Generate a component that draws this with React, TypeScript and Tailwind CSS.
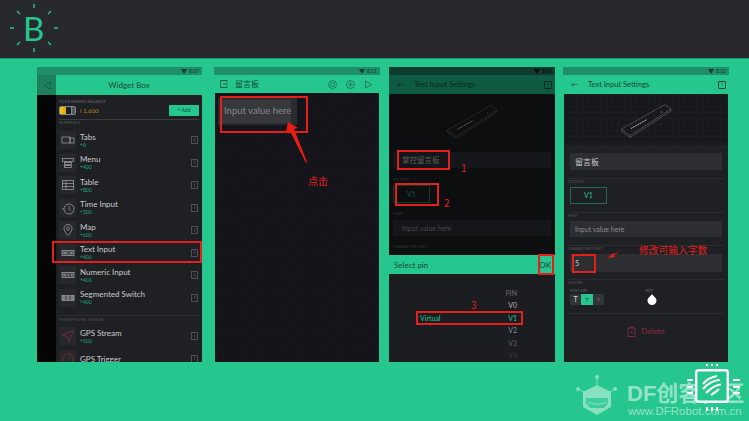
import type { ReactNode } from "react";

const uiFont = { fontFamily: '"Lato", "Noto Sans CJK SC", sans-serif' };
const cjkFont = { fontFamily: '"Noto Sans CJK SC", sans-serif' };

const widgets = [
  { name: "Tabs", cost: "+0", icon: "tabs" },
  { name: "Menu", cost: "+400", icon: "menu" },
  { name: "Table", cost: "+800", icon: "table" },
  { name: "Time Input", cost: "+200", icon: "time" },
  { name: "Map", cost: "+600", icon: "map" },
  { name: "Text Input", cost: "+400", icon: "text" },
  { name: "Numeric Input", cost: "+400", icon: "numeric" },
  { name: "Segmented Switch", cost: "+400", icon: "segment" },
];

function WidgetIcon({ kind }: { kind: string }) {
  const c = "#a4a6a9";
  return (
    <svg width="14" height="14" viewBox="0 0 14 14" fill="none" stroke={c} strokeWidth="0.7">
      {kind === "tabs" && (
        <>
          <rect x="1" y="4" width="8" height="6" />
          <rect x="9" y="5" width="4" height="5" />
        </>
      )}
      {kind === "menu" && (
        <>
          <rect x="1.5" y="2.500" width="11" height="3" />
          <rect x="3.500" y="6.500" width="7" height="2" />
          <rect x="3.500" y="9.500" width="7" height="2" />
        </>
      )}
      {kind === "table" && (
        <>
          <rect x="1.500" y="2.500" width="11" height="9" />
          <path d="M1.500 5.500h11M1.500 8.500h11M5 2.500v9" />
        </>
      )}
      {kind === "time" && (
        <>
          <circle cx="8" cy="8" r="5" />
          <path d="M8 5v3l2 1.500M1 8h2" />
        </>
      )}
      {kind === "map" && (
        <>
          <path d="M7 1.500c-2.500 0-4 1.800-4 4 0 3 4 7 4 7s4-4 4-7c0-2.200-1.500-4-4-4z" />
          <circle cx="7" cy="5.500" r="1.500" />
        </>
      )}
      {kind === "text" && (
        <>
          <rect x="1" y="4.500" width="12" height="5" fill="#4c4e52" />
          <path d="M2.500 7h3.500M9 7h2.500" stroke="#d8d9da" />
        </>
      )}
      {kind === "numeric" && (
        <>
          <rect x="1" y="4.500" width="12" height="5" fill="#4c4e52" />
          <path d="M2.500 7h2.500M7 7h1M10 7h1.500" stroke="#d8d9da" />
        </>
      )}
      {kind === "segment" && (
        <>
          <rect x="1" y="4.500" width="12" height="5" fill="#7b7d80" />
          <path d="M5 4.500v5M9 4.500v5" stroke="#222" />
        </>
      )}
      {kind === "gps" && <path d="M12.500 1.500 1.500 6l5 1.500 1.500 5z" stroke="#8f2c44" />}
      {kind === "trigger" && (
        <>
          <circle cx="7" cy="7" r="5.500" stroke="#8f2c44" />
          <path d="M7 7l3-3" stroke="#8f2c44" />
        </>
      )}
    </svg>
  );
}

function InfoBox() {
  return (
    <span className="flex h-[8px] w-[7px] items-center justify-center border border-[#4c4e52] text-[5px] leading-none text-[#6d6f72]">
      i
    </span>
  );
}

function WidgetRow({ name, cost, icon }: { name: string; cost?: string; icon: string }) {
  return (
    <div className="flex h-[22.5px] shrink-0 items-center pl-[3px] pr-[4px]">
      <div className="flex h-[18px] w-[17px] shrink-0 items-center justify-center bg-[#26282c]">
        <WidgetIcon kind={icon} />
      </div>
      <div className="ml-[4px] flex-1 leading-none">
        <div className="text-[8px] leading-[10px] text-[#c9cacc]">{name}</div>
        {cost && <div className="text-[5px] leading-[7px] text-[#25a87c]">{cost}</div>}
      </div>
      <InfoBox />
    </div>
  );
}

function StatusBar({ time, bg, color }: { time: string; bg: string; color: string }) {
  return (
    <div className={`flex h-[8px] shrink-0 items-center justify-end gap-[2px] pr-[3px] ${bg}`}>
      <svg width="6" height="5" viewBox="0 0 6 5">
        <path d="M0 0h6L3 5z" fill={color} />
      </svg>
      <span className="text-[5px] leading-none" style={{ color }}>
        {time}
      </span>
    </div>
  );
}

function Battery() {
  return (
    <div className="flex h-[9px] w-[17px] overflow-hidden rounded-[2px] border border-[#888a8c]">
      <div className="w-[6px] bg-gradient-to-r from-[#f6c90e] to-[#d9a90a]" />
      <div className="ml-auto w-[4px] border-l border-[#888a8c] bg-[#55575a]" />
    </div>
  );
}

function WidgetBoxPhone() {
  return (
    <div className="flex w-[165px] shrink-0 flex-col overflow-hidden">
      <StatusBar time="8:07" bg="bg-[#1f8f69]" color="#123c30" />
      <div className="flex h-[20px] shrink-0 items-center bg-[#25c78f]">
        <div className="flex h-full w-[19px] items-center justify-center bg-[#1c7f5e]">
          <svg width="8" height="9" viewBox="0 0 8 9" fill="none" stroke="#0f5d44" strokeWidth="0.8">
            <path d="M7 1v7L1 4.500z" />
          </svg>
        </div>
        <div className="flex-1 text-center text-[8px] text-[#174a3a]">Widget Box</div>
      </div>
      <div className="flex min-h-0 flex-1">
        <div className="w-[19px] shrink-0 bg-[#050506]" />
        <div className="min-w-0 flex-1 overflow-hidden bg-[#1e2024]">
          <div className="pl-[3px] pr-[3px] pt-[4px]">
            <div className="text-[4px] leading-[5px] text-[#67696c]">YOUR ENERGY BALANCE</div>
            <div className="mt-[1px] flex h-[11px] items-center">
              <Battery />
              <span className="ml-[4px] text-[6px] text-[#b8860b]">I 1,600</span>
              <span className="ml-auto flex h-[11px] w-[30px] items-center justify-center rounded-[1px] bg-[#25c78f] text-[5px] text-[#174a3a]">
                + Add
              </span>
            </div>
            <div className="mt-[3px] h-px bg-[#3a3c40]" />
            <div className="text-[4px] leading-[6px] text-[#56585b]">INTERFACE</div>
          </div>
          <div className="mt-[3px]">
            {widgets.map((w) => (
              <WidgetRow key={w.name} {...w} />
            ))}
            <div className="mx-[3px] mt-[6px] border-t border-[#2a2c30] text-[4px] leading-[8px] text-[#4f5154]">
              SMARTPHONE SENSORS
            </div>
            <div className="h-[1px]" />
            <WidgetRow name="GPS Stream" cost="+500" icon="gps" />
            <WidgetRow name="GPS Trigger" icon="trigger" />
          </div>
        </div>
      </div>
    </div>
  );
}

function CanvasPhone() {
  return (
    <div className="flex w-[166px] shrink-0 flex-col overflow-hidden">
      <StatusBar time="8:11" bg="bg-[#1f8f69]" color="#123c30" />
      <div className="flex h-[18px] shrink-0 items-center pl-[5px] pr-[7px] text-[#174a3a]">
        <svg width="10" height="10" viewBox="0 0 10 10" fill="none" stroke="#174a3a" strokeWidth="0.8">
          <path d="M8 3V1.500H1.500v7H8V7M4 5h5" />
        </svg>
        <span className="ml-[6px] text-[8px]" style={cjkFont}>
          留言板
        </span>
        <div className="ml-auto flex items-center gap-[9px]">
          <svg width="9" height="9" viewBox="0 0 9 9" fill="none" stroke="#1b5c48" strokeWidth="0.7">
            <circle cx="4.500" cy="4.500" r="4" />
            <circle cx="4.500" cy="4.500" r="2" />
          </svg>
          <svg width="9" height="9" viewBox="0 0 9 9" fill="none" stroke="#1b5c48" strokeWidth="0.7">
            <circle cx="4.500" cy="4.500" r="4" />
            <path d="M4.500 2v5M2 4.500h5" />
          </svg>
          <svg width="9" height="9" viewBox="0 0 9 9" fill="none" stroke="#1b5c48" strokeWidth="0.7">
            <path d="M1.500 1v7l6-3.500z" />
          </svg>
        </div>
      </div>
      <div className="mx-px flex-1 bg-[#14141a] bg-[radial-gradient(#2a2b31_0.5px,transparent_0.7px)] bg-[length:5.700px_5.700px] pl-[3px] pt-[5px]">
        <div className="flex h-[27px] w-[79px] items-center bg-[#2a2b2f] pl-[3px] pr-[6px]">
          <div className="flex h-[23px] w-full items-center bg-[#37383c] pl-[3px] text-[9.500px] whitespace-nowrap text-[#85868a]">
            Input value here
          </div>
        </div>
      </div>
    </div>
  );
}

function IsoWidget({ dim }: { dim?: boolean }) {
  const c = dim ? "#3c3d40" : "#77797c";
  const t = dim ? "#6a6b6e" : "#d0d1d3";
  return (
    <svg width="51" height="34" viewBox="0 0 51 34" fill="none" stroke={c} strokeWidth="0.5">
      <path d="M.5 25 44 .5l6 4.500L9 31.500z" />
      <path d="M.5 25v2L9 33.500 50 7V5M9 31.500v2" />
      <path d="M10 24.500 26 15.500" stroke={t} strokeWidth="0.9" strokeDasharray="1.500 0.500" />
      <path d="M40 8.500l1.500-.8" stroke={t} />
    </svg>
  );
}

function TitleBar({ bg, color }: { bg: string; color: string }) {
  return (
    <div className={`flex h-[19px] shrink-0 items-center pl-[8px] pr-[3px] ${bg}`} style={{ color }}>
      <span className="w-[17px] text-[7px] leading-none">←</span>
      <span className="text-[7.500px] whitespace-nowrap">Text Input Settings</span>
      <span className="ml-auto flex h-[8px] w-[8px] items-center justify-center rounded-[1px] border text-[5px] leading-none" style={{ borderColor: color }}>
        i
      </span>
    </div>
  );
}

function SelectPinPhone() {
  return (
    <div className="flex w-[166px] shrink-0 flex-col overflow-hidden">
      <StatusBar time="8:06" bg="bg-[#0d3b2d]" color="#0b0c0d" />
      <TitleBar bg="bg-[#0e5a43]" color="#0a2a20" />
      <div className="flex h-[161px] shrink-0 flex-col bg-[#0d0e10] px-[4px]">
        <div className="flex h-[58px] shrink-0 justify-center pt-[11px]">
          <IsoWidget dim />
        </div>
        <div className="flex h-[16px] shrink-0 items-center bg-[#15161a] px-[9px] text-[7.500px] text-[#5b5c5f]" style={cjkFont}>
          掌控留言板
        </div>
        <div className="mt-[9px] text-[4px] leading-[5px] text-[#36383a]">OUTPUT</div>
        <div className="mt-[3px] flex h-[18px] w-[37px] shrink-0 items-center justify-center border border-[#0f3a2c] text-[7px] text-[#0f5a43]">V1</div>
        <div className="mt-[8px] text-[4px] leading-[5px] text-[#36383a]">HINT</div>
        <div className="mt-[4px] flex h-[16px] shrink-0 items-center bg-[#15161a] px-[9px] text-[7px] text-[#45474a]">Input value here</div>
        <div className="mt-[8px] text-[4px] leading-[5px] text-[#36383a]">CHARACTER LIMIT</div>
      </div>
      <div className="flex h-[19px] shrink-0 items-center justify-between bg-[#25c78f] pl-[5px] pr-[4px] text-[8px] text-[#174a3a]">
        <span>Select pin</span>
        <span>OK</span>
      </div>
      <div className="flex min-h-0 flex-1 flex-col items-end overflow-hidden bg-[#1b1d21] pr-[38px] pt-[13px] text-[7px] leading-[12.400px]">
        <span className="text-[#66686b]">PIN</span>
        <span className="text-[#b7b8ba]">V0</span>
        <span className="relative w-full pl-[31px] text-right text-[#25c78f]">
          <span className="absolute left-[31px]">Virtual</span>V1
        </span>
        <span className="text-[#8b8d8f]">V2</span>
        <span className="text-[#5e6063]">V3</span>
        <span className="text-[#36383a]">V4</span>
      </div>
    </div>
  );
}

function SettingsPhone() {
  return (
    <div className="flex w-[166px] shrink-0 flex-col overflow-hidden">
      <StatusBar time="8:12" bg="bg-[#1f8f69]" color="#123c30" />
      <TitleBar bg="bg-[#25c78f]" color="#174a3a" />
      <div className="mx-px flex min-h-0 flex-1 flex-col bg-[#1e2024]">
        <div className="flex h-[51px] shrink-0 justify-center bg-[#17181b] bg-[linear-gradient(#1c1d21_1px,transparent_1px),linear-gradient(90deg,#1c1d21_1px,transparent_1px)] bg-[length:6px_6px] pt-[10px]">
          <IsoWidget />
        </div>
        <div className="mx-[6px] mt-[8px] flex h-[17px] shrink-0 items-center bg-[#2d2e32] px-[5px] text-[8px] text-[#c9cacc]" style={cjkFont}>
          留言板
        </div>
        <div className="mx-[4px] mt-[8px] border-t border-[#2a2c30] text-[4px] leading-[6px] text-[#55575a]">OUTPUT</div>
        <div className="mx-[6px] mt-[2px] flex h-[17px] w-[37px] shrink-0 items-center justify-center border border-[#1f6b52] text-[7px] text-[#25c78f]">V1</div>
        <div className="mx-[4px] mt-[8px] border-t border-[#2a2c30] text-[4px] leading-[6px] text-[#55575a]">HINT</div>
        <div className="mx-[6px] mt-[2px] flex h-[16px] shrink-0 items-center bg-[#2d2e32] px-[5px] text-[7px] text-[#8a8b8e]">Input value here</div>
        <div className="mx-[4px] mt-[8px] border-t border-[#2a2c30] text-[4px] leading-[6px] text-[#55575a]">CHARACTER LIMIT</div>
        <div className="mx-[6px] mt-[2px] flex h-[18px] shrink-0 items-center bg-[#2d2e32] px-[5px] text-[7px] text-[#c9cacc]">5</div>
        <div className="mx-[4px] mt-[7px] border-t border-[#2a2c30] text-[4px] leading-[6px] text-[#55575a]">DESIGN</div>
        <div className="relative mx-[6px] mt-[3px] h-[23px] shrink-0">
          <div className="text-[3.500px] leading-[5px] text-[#67696c]">FONT SIZE</div>
          <div className="flex">
            <span className="flex h-[11px] w-[11px] items-center justify-center bg-[#333438] text-[7px] text-[#d8d9da]">T</span>
            <span className="flex h-[11px] w-[12px] items-center justify-center bg-[#25c78f] text-[6px] text-[#174a3a]">T</span>
            <span className="flex h-[11px] w-[11px] items-center justify-center bg-[#333438] text-[4px] text-[#a5a6a8]">T</span>
          </div>
          <span className="absolute left-[75px] top-0 text-[3.500px] leading-[5px] text-[#67696c]">TEXT</span>
          <svg className="absolute left-[77px] top-[5px]" width="10" height="11" viewBox="0 0 10 11">
            <path d="M5 0c1 2 4.500 3.500 4.500 6.500a4.500 4.500 0 0 1-9 0C.5 3.500 4 2 5 0z" fill="#fff" />
          </svg>
        </div>
        <div className="mx-[4px] mt-[1px] border-t border-[#2a2c30]" />
        <div className="mt-[11px] flex items-center justify-center gap-[5px] text-[8px] text-[#8f2c44]">
          <svg width="9" height="11" viewBox="0 0 9 11" fill="none" stroke="#8f2c44" strokeWidth="0.8">
            <rect x="1" y="2" width="7" height="8.500" />
            <path d="M3 2V1h3v1M3.500 5l2 2.500M5.500 5l-2 2.500" />
          </svg>
          Delete
        </div>
      </div>
    </div>
  );
}

function RedBox({ className }: { className: string }) {
  return <div className={`absolute border-2 border-[#e3201b] ${className}`} />;
}

function RedLabel({ className, children }: { className: string; children: ReactNode }) {
  return (
    <span className={`absolute leading-none whitespace-nowrap text-[#e3201b] ${className}`} style={cjkFont}>
      {children}
    </span>
  );
}

function Annotations() {
  return (
    <>
      <RedBox className="left-[52px] top-[241px] h-[22px] w-[150px]" />
      <RedBox className="left-[220px] top-[96px] h-[37px] w-[88px]" />
      <RedBox className="left-[397px] top-[150px] h-[20px] w-[53px]" />
      <RedBox className="left-[395px] top-[183px] h-[23px] w-[44px]" />
      <RedBox className="left-[538px] top-[254px] h-[21px] w-[16px]" />
      <RedBox className="left-[416px] top-[311px] h-[14px] w-[107px]" />
      <RedBox className="left-[572px] top-[254px] h-[19px] w-[24px]" />
      <RedLabel className="left-[308px] top-[176px] text-[10px]">点击</RedLabel>
      <RedLabel className="left-[461px] top-[163px] text-[10px]">1</RedLabel>
      <RedLabel className="left-[444px] top-[198px] text-[10px]">2</RedLabel>
      <RedLabel className="left-[471px] top-[300px] text-[10px]">3</RedLabel>
      <RedLabel className="left-[639px] top-[246px] text-[9.750px]">修改可输入字数</RedLabel>
      <svg className="pointer-events-none absolute left-0 top-0" width="749" height="421" fill="#ec1c14">
        <path d="M288 122l-2 10 4-1 16 32 1-1-13-33 4-1z" />
        <path d="M608 258l5-5 .5 1.500 7-4.500-6.500 5.500 1 1.500z" />
      </svg>
    </>
  );
}

function Logo() {
  return (
    <div className="absolute left-[8px] top-[3px] h-[50px] w-[52px]">
      <svg className="absolute inset-0" width="52" height="50" viewBox="0 0 52 50" stroke="#25c78f" strokeWidth="1.400">
        <path d="M26 1v4M26 45v4M2 25h4M46 25h4M9 8l3 3M40 39l3 3M43 8l-3 3M12 39l-3 3" />
      </svg>
      <span className="absolute left-[15px] top-[3px] text-[33px] leading-[44px] font-normal text-[#25c78f]" style={{ fontFamily: '"Lato", sans-serif' }}>
        B
      </span>
    </div>
  );
}

function Watermark() {
  return (
    <>
      <svg className="absolute left-[576px] top-[374px]" width="42" height="42" viewBox="0 0 42 42" fill="#ffffff" fillOpacity="0.45" stroke="#ffffff" strokeOpacity="0.45">
        <circle cx="21" cy="3" r="2" stroke="none" />
        <circle cx="2" cy="15" r="2" stroke="none" />
        <circle cx="39" cy="15" r="2" stroke="none" />
        <path d="M21 5v6M4 16l4 2M37 16l-3 2" fill="none" />
        <path d="M21 11 35 18v15L21 41 7 33V18z" stroke="none" />
        <path d="M10 24h22v5l-4 5H14l-4-5z" fill="#25c78f" fillOpacity="0.75" stroke="none" />
        <path d="M12 28c5 3 13 3 18 0" fill="none" />
      </svg>
      <span className="absolute left-[627px] top-[379px] text-[22px] leading-[30px] font-bold whitespace-nowrap text-white/50" style={{ fontFamily: '"Liberation Sans", "Noto Sans CJK SC", sans-serif' }}>
        DF创客社区
      </span>
      <span className="absolute left-[628px] top-[404px] text-[11.500px] leading-[14px] whitespace-nowrap text-white/50" style={{ fontFamily: '"Liberation Sans", sans-serif' }}>
        www.DFRobot.com.cn
      </span>
      <svg className="absolute left-[686px] top-[362px]" width="56" height="50" viewBox="0 0 56 50" fill="none" stroke="#fff">
        <rect x="10.200" y="8.200" width="31.600" height="31.600" rx="2.500" strokeWidth="2.400" fill="#25c78f" />
        <path d="M17 22C20 18 26 15 31 14M17 27C21 22 28 18 34 18M20 31C24 27 29 23 35 22.500M25 33C28 31 31 29 33 27" strokeWidth="2.200" />
        <path d="M21 2v2M26 2v2M31 2v2M21 45v4M26 45v4M31 45v4M1 18h6M1 25h6M1 31h6M47 18h7M47 25h7M47 31h7" strokeWidth="2" />
      </svg>
    </>
  );
}

export default function App() {
  return (
    <div className="relative flex h-[421px] w-[749px] flex-col overflow-hidden bg-[#25c78f]" style={uiFont}>
      <header className="h-[59px] shrink-0 border-b border-[#1f9a70] bg-[#27292e]" />
      <Logo />
      <main className="mt-[8px] flex h-[295px] shrink-0 pl-[37px]">
        <WidgetBoxPhone />
        <div className="w-[12px] shrink-0" />
        <CanvasPhone />
        <div className="w-[9px] shrink-0" />
        <SelectPinPhone />
        <div className="w-[8px] shrink-0" />
        <SettingsPhone />
      </main>
      <Annotations />
      <Watermark />
    </div>
  );
}
